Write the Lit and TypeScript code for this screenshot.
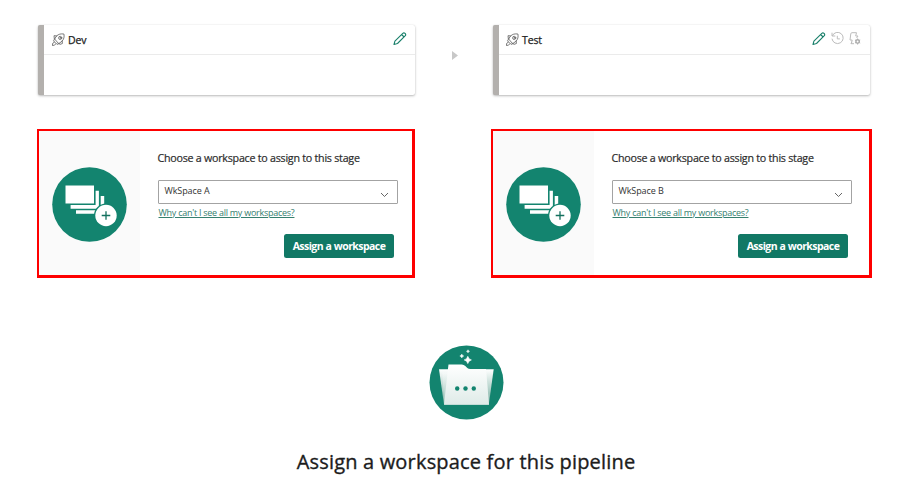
import { LitElement, html, css } from "lit";
import { customElement, property } from "lit/decorators.js";

const rocket = html`<svg width="13" height="13" viewBox="0 0 13 13" fill="none" stroke="#666" stroke-width="0.85" stroke-linejoin="round" stroke-linecap="round">
  <path d="M2.800 5.600 4.600 3C6.400 1.100 9 .6 11.900 1c.6 2.700 0 5.400-1.900 7.200L7 10.500Z"/>
  <path d="M4.700 2.900 2 2.700 2.300 5.500M10.200 7.900l.2 2.600-2.400.9-1-.9M2.800 5.600 1.500 7.900l3.500 3.500 2-.9M2.300 9.200.7 10.300l-.4 2.200 2.200-.3 1.300-1.400"/>
  <circle cx="8.200" cy="4.900" r="1.600"/><circle cx="8.200" cy="4.900" r=".3"/>
</svg>`;

const pencil = html`<svg width="14" height="14" viewBox="0 0 14 14" fill="none" stroke="#1a806b" stroke-width="1.100" stroke-linejoin="round">
  <path d="M1 12.500l.9-3.400L9.800 1.300c1.500-1.300 3.700.8 2.500 2.400L4.500 11.500 1 12.500ZM8.600 2.500l2.500 2.500"/>
</svg>`;

const history = html`<svg width="13" height="13" viewBox="0 0 13 13" fill="none" stroke="#bcbcbc" stroke-width="1">
  <path d="M1 .7v3.300h3.300M1.300 4A5.600 5.600 0 1 1 1 6.700M6.300 3.800v3.100h2.600"/>
</svg>`;

const rules = html`<svg width="12" height="13" viewBox="0 0 12 13" fill="none" stroke="#bcbcbc" stroke-width="1">
  <path d="M5 11.700H2.200L3.200 8H1l.8-6.200Q2 .7 3 .7h4.500L6.700 4H9L7.600 6M2.900 9.800l-.8 2.200"/>
  <circle cx="8.600" cy="9.500" r="1.700" stroke="#adadad" stroke-width="1.500"/>
  <path d="M8.600 6.500v1.200m0 3.600v1.200M6 8l1 .6m3.200 1.800 1 .6M6 11l1-.6m3.200-1.800 1-.6" stroke="#adadad"/>
</svg>`;

const stack = html`<svg width="75" height="75" viewBox="0 0 75 75">
  <circle cx="37.500" cy="37.500" r="37.300" fill="#13846f"/>
  <g fill="#fff">
    <path d="M13.500 18.500h28.500v18h-28.500z"/>
    <path d="M43.600 23.700h3.300v18.100H18.600v-3.700h25z"/>
    <path d="M48.700 29h3.500v17.800H24v-3.600h24.700z"/>
  </g>
  <circle cx="54" cy="48.500" r="12" fill="#13846f"/>
  <circle cx="54" cy="48.500" r="10.700" fill="#fff"/>
  <path d="M54 44.200v8.600M49.700 48.500h8.600" stroke="#13705e" stroke-width="1.300"/>
</svg>`;

const folder = html`<svg width="75" height="75" viewBox="0 0 75 75">
  <defs>
    <linearGradient id="front" x1="0" y1="0" x2="0" y2="1"><stop offset="0" stop-color="#fff"/><stop offset="1" stop-color="#dfebe8"/></linearGradient>
    <linearGradient id="back" x1="0" y1="0" x2="0" y2="1"><stop offset="0" stop-color="#fff"/><stop offset="1" stop-color="#75ac9e"/></linearGradient>
  </defs>
  <circle cx="37.500" cy="37.500" r="37" fill="#13846f"/>
  <path d="M10 24.300h54.700L59.800 59.500H15z" fill="url(#back)"/>
  <path d="M14.700 27.500h42.500L60 59.800H15.300l-2-32.300z" fill="url(#front)" opacity=".35"/>
  <path d="M19.500 19.500h13.300q2 0 3.500 1.500l2 2q1.200 1 3 1H57l3 35.700H15L18.700 26z" fill="url(#front)"/>
  <g fill="#13846f"><circle cx="28.200" cy="43.500" r="2.200"/><circle cx="36.500" cy="43.500" r="2.200"/><circle cx="44.800" cy="43.500" r="2.200"/></g>
  <g fill="#fff">
    <path d="M38.800 11.300q.7 3 3.600 3.600-2.900.7-3.600 3.700-.7-3-3.600-3.700 2.900-.6 3.600-3.600Z" stroke="#fff" stroke-width=".6"/>
    <path d="M32.800 9q.4 1.700 2 2-1.600.4-2 2-.4-1.600-2-2 1.600-.3 2-2Z" stroke="#fff" stroke-width=".4"/>
    <path d="M39 4.700q.3 1.400 1.600 1.600-1.300.3-1.600 1.600-.3-1.300-1.600-1.600 1.300-.2 1.600-1.600Z" stroke="#fff" stroke-width=".4"/>
  </g>
</svg>`;

@customElement("stage-card")
export class StageCard extends LitElement {
  @property() name = "";
  @property({ type: Boolean }) extended = false;

  static styles = css`
    :host { display: block; }
    .card {
      box-sizing: border-box; height: 70px; background: #fff;
      border-left: 6px solid #b3b0ad; border-radius: 2px;
      box-shadow: 0 1px 2.500px rgba(0, 0, 0, 0.27), 0 0 1px rgba(0, 0, 0, 0.12);
    }
    .head {
      box-sizing: border-box; height: 30px; display: flex; align-items: center;
      padding: 0 8px 1px 8px; border-bottom: 1px solid #ebebeb;
    }
    .extended { padding-right: 9px; padding-left: 7px; }
    .name { font-size: 10.500px; color: #222; -webkit-text-stroke: 0.25px #222; margin-left: 3px; flex: 1; padding-top: 1px; letter-spacing: -0.15px; }
    .tools { display: flex; align-items: center; gap: 5px; padding-bottom: 1px; }
    svg { display: block; }
  `;

  render() {
    return html`<div class="card">
      <div class="head ${this.extended ? "extended" : ""}">
        ${rocket}<span class="name">${this.name}</span>
        <span class="tools">${pencil}${this.extended ? html`${history}${rules}` : null}</span>
      </div>
    </div>`;
  }
}

@customElement("assign-panel")
export class AssignPanel extends LitElement {
  @property() workspace = "";

  static styles = css`
    :host { display: block; }
    .panel { box-sizing: border-box; display: flex; height: 149px; border: 2.500px solid #fe0000; border-width: 2px 3px 3px 2px; background: #fff; }
    .art { width: 101px; padding-top: 2px; box-sizing: border-box; background: #fafafa; display: flex; align-items: center; justify-content: center; flex: none; }
    .form { width: 240px; padding: 19px 0 0 17.500px; box-sizing: content-box; display: flex; flex-direction: column; }
    .title { font-size: 10.700px; line-height: 16px; color: #2b2b2b; -webkit-text-stroke: 0.2px #2b2b2b; letter-spacing: -0.245px; white-space: nowrap; }
    .select {
      box-sizing: border-box; margin-top: 14px; height: 24px; border: 1px solid #a3a3a3; border-radius: 1px;
      padding: 0 8px 0 6px; display: flex; align-items: center; justify-content: space-between;
      font-size: 9px; letter-spacing: -0.1px; color: #333;
    }
    .value { padding-bottom: 3px; }
    .select svg { margin-top: 5px; }
    .link { margin: 2px 0 0 1px; font-size: 9px; line-height: 14px; letter-spacing: -0.26px; color: #36806f; text-decoration: underline; white-space: nowrap; align-self: flex-start; }
    .button {
      box-sizing: border-box; align-self: flex-end; margin: 13.500px 3.500px 0 0; width: 110px; height: 24px; border: 0; padding: 0; border-radius: 2.500px;
      background: #117865; color: #fff; font: 700 10.500px/24px "Open Sans", "Noto Sans", sans-serif; letter-spacing: -0.56px; word-spacing: 0.3px; text-align: center; white-space: nowrap;
    }
    svg { display: block; }
  `;

  render() {
    return html`<div class="panel">
      <div class="art">${stack}</div>
      <div class="form">
        <div class="title">Choose a workspace to assign to this stage</div>
        <div class="select">
          <span class="value">${this.workspace}</span>
          <svg width="9" height="6" viewBox="0 0 9 6" fill="none" stroke="#555" stroke-width=".9"><path d="M1 1l3.500 3.500L8 1"/></svg>
        </div>
        <a class="link">Why can't I see all my workspaces?</a>
        <button class="button">Assign a workspace</button>
      </div>
    </div>`;
  }
}

@customElement("app-root")
export class AppRoot extends LitElement {
  static styles = css`
    :host { display: block; box-sizing: border-box; height: 483px; overflow: hidden; background: #fff; padding: 25px 35px 0 37px; font-family: "Open Sans", "Noto Sans", sans-serif; }
    .stages { display: grid; grid-template-columns: 378px 76px 381px; row-gap: 34px; }
    .first { margin-left: 1px; }
    .second { margin: 0 2px; }
    .arrow { display: flex; align-items: center; justify-content: center; padding: 0 0 9px 4px; }
    .end { grid-column: 3; }
    .footer { display: flex; flex-direction: column; align-items: center; width: 858px; padding-top: 67px; }
    .footer svg { display: block; }
    h1 { margin: 27px 0 0; font-size: 20px; line-height: 30px; font-weight: 400; letter-spacing: 0.18px; color: #1c1c1c; -webkit-text-stroke: 0.35px #1c1c1c; white-space: nowrap; }
  `;

  render() {
    return html`
      <div class="stages">
        <stage-card class="first" name="Dev"></stage-card>
        <div class="arrow"><svg width="6" height="9" viewBox="0 0 6 9"><path d="M0 0l6 4.500L0 9z" fill="#c8c8c8"/></svg></div>
        <stage-card class="second" name="Test" extended></stage-card>
        <assign-panel workspace="WkSpace A"></assign-panel>
        <assign-panel class="end" workspace="WkSpace B"></assign-panel>
      </div>
      <div class="footer">${folder}<h1>Assign a workspace for this pipeline</h1></div>`;
  }
}
